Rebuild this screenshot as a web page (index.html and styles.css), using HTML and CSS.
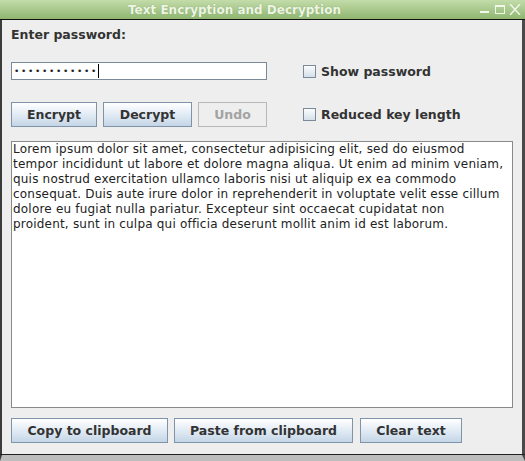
FILE: index.html
```html
<!DOCTYPE html>
<html>
<head>
    <title>Text Encryption and Decryption</title>
    <link rel="stylesheet" href="styles.css">
</head>
<body>
    <div class="window">
        <div class="titlebar">
            <span class="title">Text Encryption and Decryption</span>
            <div class="controls">
                <svg width="12" height="10" viewBox="0 0 12 10"><rect x="1" y="7" width="9" height="2" fill="#f2f7ec"/></svg>
                <svg width="12" height="10" viewBox="0 0 12 10"><rect x="1.5" y="1.5" width="9" height="8" fill="none" stroke="#f2f7ec" stroke-width="1"/><rect x="1.5" y="1.5" width="9" height="1.5" fill="#f2f7ec"/></svg>
                <svg width="12" height="11" viewBox="0 0 12 11"><path d="M1 0 L11 11 M11 0 L1 11" stroke="#f2f7ec" stroke-width="1.4"/></svg>
            </div>
        </div>

        <div class="content">
            <div class="label">Enter password:</div>

            <div class="row pw-row">
                <div class="field"><span class="dots">••••••••••••</span><span class="caret"></span></div>
                <label class="check"><span class="box"></span>Show password</label>
            </div>

            <div class="row btn-row">
                <div class="buttons">
                    <button class="btn btn-encrypt">Encrypt</button>
                    <button class="btn btn-decrypt">Decrypt</button>
                    <button class="btn btn-undo" disabled>Undo</button>
                </div>
                <label class="check"><span class="box"></span>Reduced key length</label>
            </div>

            <div class="textarea">
                <span class="line">Lorem ipsum dolor sit amet, consectetur adipisicing elit, sed do eiusmod</span>
                <span class="line">tempor incididunt ut labore et dolore magna aliqua. Ut enim ad minim veniam,</span>
                <span class="line">quis nostrud exercitation ullamco laboris nisi ut aliquip ex ea commodo</span>
                <span class="line">consequat. Duis aute irure dolor in reprehenderit in voluptate velit esse cillum</span>
                <span class="line">dolore eu fugiat nulla pariatur. Excepteur sint occaecat cupidatat non</span>
                <span class="line">proident, sunt in culpa qui officia deserunt mollit anim id est laborum.</span>
            </div>

            <div class="bottom-buttons">
                <button class="btn btn-copy">Copy to clipboard</button>
                <button class="btn btn-paste">Paste from clipboard</button>
                <button class="btn btn-clear">Clear text</button>
            </div>
        </div>
    </div>
</body>
</html>
```

FILE: styles.css
```css
html, body { margin: 0; padding: 0; background: #2a2a2a; }
body { font-family: "DejaVu Sans", sans-serif; color: #333; }

.window { width: 525px; height: 461px; box-sizing: border-box; background: #eeeeee; border-left: 2px solid #3c3c3c; border-right: 3px solid #4a4a4a; border-bottom: 6px solid #bdbdbd; display: flex; flex-direction: column; position: relative; }
.window::after { content: ""; position: absolute; left: -2px; right: -3px; bottom: 0; height: 1px; background: #222; }

.titlebar { height: 19px; margin: 0 -3px 0 -2px; background: linear-gradient(#c3dcaa, #8fb670); border-bottom: 1px solid #111; display: flex; align-items: center; justify-content: center; position: relative; }
.title { font-weight: bold; font-size: 12px; color: #eef5e6; text-shadow: 0 0 1px #7c9f5e; margin-left: -56px; }
.controls { position: absolute; right: 4px; top: 4px; display: flex; gap: 3px; }

.content { padding: 7px 0 0 9px; flex: 1; }
.label { font-weight: bold; font-size: 12.5px; line-height: 16px; }

.row { display: flex; align-items: center; }
.pw-row { margin-top: 19px; }
.btn-row { margin-top: 22px; }

.field { width: 252px; height: 16px; border: 1px solid #7a8a99; background: #fff; display: flex; align-items: center; padding-left: 2px; box-sizing: content-box; }
.dots { font-size: 9px; letter-spacing: 1.7px; color: #222; }
.caret { width: 1px; height: 14px; background: #000; }

.check { display: flex; align-items: center; margin-left: 36px; font-weight: bold; font-size: 12.5px; }
.box { width: 11px; height: 11px; border: 1px solid #7a8a99; background: linear-gradient(#fafcfd, #d4dfea); margin-right: 5px; }

.buttons { display: flex; gap: 6px; width: 256px; }
.btn { font-family: "DejaVu Sans", sans-serif; font-weight: bold; font-size: 12.5px; color: #333; height: 25px; padding: 0; border: 1px solid #7f94a8; background: linear-gradient(#ffffff, #dce7f2 60%, #c4d5e6); box-sizing: border-box; }
.btn-encrypt { width: 86px; }
.btn-decrypt { width: 89px; }
.btn-undo { width: 69px; background: #eeeeee; border-color: #b8b8b8; color: #a3a3a3; }

.textarea { margin-top: 14px; width: 502px; height: 267px; box-sizing: border-box; border: 1px solid #8a8a8a; background: #fff; font-size: 12px; letter-spacing: 0.2px; line-height: 15px; padding: 0 1px; color: #222; overflow: hidden; }
.line { display: block; white-space: nowrap; }

.bottom-buttons { display: flex; gap: 6px; margin-top: 10px; }
.btn-copy { width: 157px; }
.btn-paste { width: 179px; }
.btn-clear { width: 102px; margin-left: 1px; }
```
